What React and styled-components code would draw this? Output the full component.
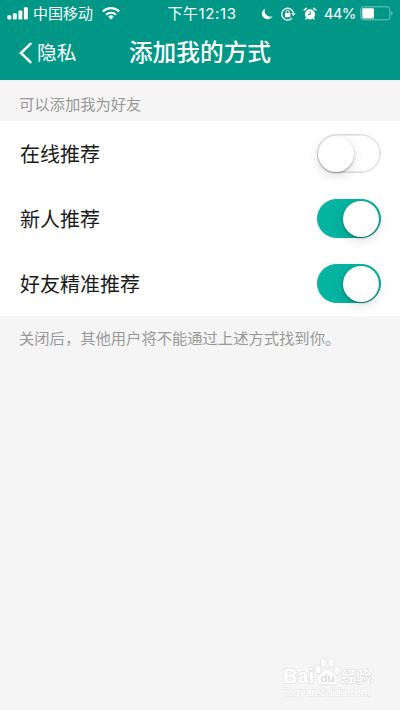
import React, { useState } from 'react'
import styled, { createGlobalStyle } from 'styled-components'

const GlobalStyle = createGlobalStyle`
    * {
        box-sizing: border-box;
    }
    body {
        margin: 0;
        background: #f5f5f5;
        font-family: Inter, "Noto Sans CJK SC", sans-serif;
    }
`

const options = [
    { id: 'online', name: '在线推荐', enabled: false },
    { id: 'newcomer', name: '新人推荐', enabled: true },
    { id: 'friend', name: '好友精准推荐', enabled: true },
]

function StatusBar() {
    return (
        <Status>
            <StatusSide>
                <svg width="22" height="13" viewBox="0 0 22 13" fill="#fff">
                    <rect x="0.4" y="8.2" width="3.9" height="4.2" rx="1" />
                    <rect x="5.9" y="6.2" width="3.9" height="6.2" rx="1" />
                    <rect x="11.4" y="3.6" width="3.9" height="8.8" rx="1" />
                    <rect x="16.9" y="0.2" width="3.9" height="12.2" rx="1" />
                </svg>
                <Carrier>中国移动</Carrier>
                <svg width="18" height="13" viewBox="0 0 18 13" fill="none" stroke="#fff">
                    <path d="M0.9 4.5a11.6 11.6 0 0 1 16.2 0" strokeWidth="2.3" />
                    <path d="M4 7.7a7.2 7.2 0 0 1 10 0" strokeWidth="2.1" />
                    <path d="M9 12.4L6.2 9.7a4 4 0 0 1 5.6 0z" fill="#fff" stroke="none" />
                </svg>
            </StatusSide>
            <Time>下午12:13</Time>
            <StatusSide $right>
                <svg width="12" height="12" viewBox="0 0 12 12" fill="#fff">
                    <path d="M4.1 0.4A5.7 5.7 0 1 0 11.6 8.2A5.9 5.9 0 0 1 4.1 0.4z" />
                </svg>
                <LockIcon width="15" height="14" viewBox="0 0 15 14" fill="none" stroke="#fff">
                    <path d="M12.4 5.8A5.9 5.9 0 1 0 11 11.2" strokeWidth="1.3" />
                    <path d="M10.2 6.2h4.5l-2.3 2.8z" fill="#fff" stroke="none" />
                    <rect x="4" y="6.1" width="5.4" height="4.1" rx="0.6" fill="#fff" stroke="none" />
                    <path d="M5.1 6.5V5a1.6 1.6 0 0 1 3.2 0v1.5" strokeWidth="1" />
                </LockIcon>
                <AlarmIcon width="14" height="14" viewBox="0 0 14 14" fill="none" stroke="#fff">
                    <circle cx="7" cy="7.3" r="5.1" fill="#fff" stroke="none" />
                    <path d="M1.2 3L3.2 1.3M12.8 3L10.8 1.3" strokeWidth="1.6" strokeLinecap="round" />
                    <path d="M3.5 11l-1 1.5M10.5 11l1 1.5" strokeWidth="1.3" />
                    <path d="M7.2 4.4v3.2H4.8" stroke="#009787" strokeWidth="1" />
                </AlarmIcon>
                <Percent>44%</Percent>
                <svg width="34" height="15" viewBox="0 0 34 15">
                    <rect x="0.8" y="0.8" width="29" height="13" rx="2.6" fill="none" stroke="#75c7be" strokeWidth="1" />
                    <rect x="2.3" y="2.2" width="11.6" height="10.2" rx="1" fill="#fff" />
                    <path d="M31.2 5.1a2.6 2.6 0 0 1 0 4.5z" fill="#75c7be" />
                </svg>
            </StatusSide>
        </Status>
    )
}

function App() {
    const [items, setItems] = useState(options)

    const toggle = (id) => {
        setItems(items.map((item) => (
            item.id === id ? { ...item, enabled: !item.enabled } : item
        )))
    }

    return (
        <Screen>
            <GlobalStyle />
            <Header>
                <StatusBar />
                <NavBar>
                    <Back>
                        <svg width="15" height="22" viewBox="0 0 15 22" fill="none" stroke="#fff" strokeWidth="2.5">
                            <path d="M13.2 1.2L2.9 11l10.3 9.8" />
                        </svg>
                        隐私
                    </Back>
                    <Title>添加我的方式</Title>
                </NavBar>
            </Header>
            <Caption>可以添加我为好友</Caption>
            <List>
                {items.map((item) => (
                    <Row key={item.id}>
                        <RowName>{item.name}</RowName>
                        <Switch
                            role="switch"
                            aria-checked={item.enabled}
                            $on={item.enabled}
                            onClick={() => toggle(item.id)}
                        >
                            <Knob />
                        </Switch>
                    </Row>
                ))}
            </List>
            <Note>关闭后，其他用户将不能通过上述方式找到你。</Note>
            <Watermark>
                <Brand>
                    <BrandText>Bai</BrandText>
                    <svg width="27" height="29" viewBox="0 0 28 30" fill="#fff" stroke="#e3e3e3" strokeWidth="1">
                        <ellipse cx="4.2" cy="12.8" rx="3.2" ry="4.4" />
                        <ellipse cx="10" cy="6" rx="3.4" ry="4.7" />
                        <ellipse cx="18" cy="6.2" rx="3.4" ry="4.6" />
                        <ellipse cx="23.8" cy="13.8" rx="3.2" ry="4.3" />
                        <path d="M14 12.2c3.4 0 4.8 3.2 7.4 5.6c2.8 2.5 4.4 4.8 3.4 7.8c-1 3-3.6 3.4-6 3.2c-3.2-0.3-6.4-0.3-9.6 0c-2.6 0.2-5.2-0.4-6-3.2c-0.9-3 0.8-5.4 3.4-7.6c2.6-2.4 4-5.8 7.4-5.8z" />
                        <text x="14" y="26.4" textAnchor="middle" fontFamily="Liberation Sans, sans-serif" fontWeight="700" fontSize="12" fill="#dcdcdc" stroke="none">du</text>
                    </svg>
                    <BrandText $small>经验</BrandText>
                </Brand>
                <Site>jingyan.baidu.com</Site>
            </Watermark>
        </Screen>
    )
}

const Screen = styled.div`
    display: flex;
    flex-direction: column;
    width: 400px;
    height: 710px;
    overflow: hidden;
    background: #f5f5f5;
`

const Header = styled.header`
    height: 80px;
    background: #009787;
    color: #fff;
`

const Status = styled.div`
    display: grid;
    grid-template-columns: 1fr auto 1fr;
    align-items: center;
    height: 26px;
    padding: 0 6px 0 7px;
`

const StatusSide = styled.div`
    display: flex;
    align-items: center;
    justify-content: ${props => props.$right ? 'flex-end' : 'flex-start'};
`

const Carrier = styled.span`
    margin: 0 9px 0 4px;
    font-size: 15px;
    line-height: 27px;
`

const Time = styled.span`
    padding-left: 3px;
    font-size: 15px;
    letter-spacing: 0.6px;
    line-height: 27px;
`

const LockIcon = styled.svg`
    margin-left: 8px;
`

const AlarmIcon = styled.svg`
    margin-left: 7px;
`

const Percent = styled.span`
    margin: 0 4px 1px 7px;
    font-size: 15px;
    letter-spacing: -0.6px;
    line-height: 25px;
`

const NavBar = styled.div`
    display: grid;
    grid-template-columns: 1fr auto 1fr;
    align-items: center;
    height: 54px;
    padding: 0 18px;
`

const Back = styled.div`
    display: flex;
    align-items: center;
    gap: 4px;
    font-size: 19.7px;
    line-height: 54px;
`

const Title = styled.h1`
    margin: 0;
    font-size: 23.7px;
    font-weight: 500;
    line-height: 50px;
`

const Caption = styled.div`
    height: 41px;
    padding: 4px 19px 0;
    border-top: 1px solid #e4f1ee;
    color: #999;
    font-size: 15.3px;
    line-height: 40px;
`

const List = styled.div`
    background: #fff;
`

const Row = styled.div`
    display: flex;
    align-items: center;
    justify-content: space-between;
    height: 65px;
    padding: 0 19px 0 20px;
`

const RowName = styled.span`
    padding-top: 3px;
    color: #1a1a1a;
    font-size: 20px;
    line-height: 62px;
`

const Switch = styled.button`
    display: flex;
    align-items: center;
    justify-content: ${props => props.$on ? 'flex-end' : 'flex-start'};
    width: 64px;
    height: 39px;
    padding: 0 ${props => props.$on ? '1px' : '0'};
    border: 1px solid ${props => props.$on ? '#04b3a0' : '#dedede'};
    border-radius: 20px;
    background: ${props => props.$on ? '#04b3a0' : '#fff'};
    box-shadow: ${props => props.$on ? 'none' : 'inset 0 0 0 0.8px #e4e4e4'};
`

const Knob = styled.span`
    width: 36px;
    height: 36px;
    border-radius: 50%;
    background: #fff;
    box-shadow: 0 1px 2px rgba(0, 0, 0, 0.35), 0 4px 12px rgba(0, 0, 0, 0.12);
`

const Note = styled.div`
    padding-left: 19px;
    color: #999;
    font-size: 15.3px;
    line-height: 45px;
`

const Watermark = styled.div`
    display: flex;
    flex-direction: column;
    width: 90px;
    margin: auto 27px 11px auto;
`

const Brand = styled.div`
    display: flex;
    align-items: flex-end;
    height: 30px;
`

const BrandText = styled.span`
    color: #fff;
    font-family: "Liberation Sans", "Noto Sans CJK SC", sans-serif;
    font-size: ${props => props.$small ? '15px' : '20px'};
    font-weight: ${props => props.$small ? 500 : 700};
    line-height: ${props => props.$small ? '19px' : '20px'};
    -webkit-text-stroke: 1.6px #e2e2e2;
    paint-order: stroke fill;
`

const Site = styled.span`
    color: #fff;
    font-family: "Liberation Sans", sans-serif;
    font-size: 10.8px;
    line-height: 13px;
    -webkit-text-stroke: 1.4px #e9e9e9;
    paint-order: stroke fill;
`

export default App
